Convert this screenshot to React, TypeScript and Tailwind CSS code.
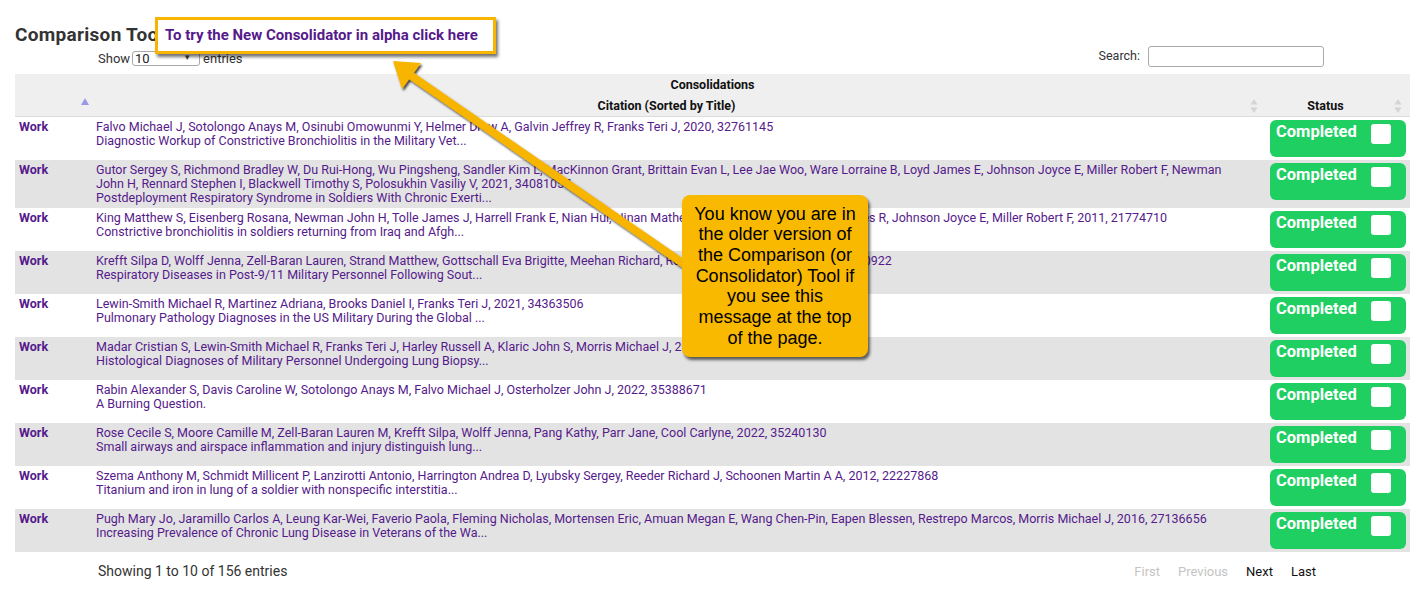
import React from 'react';

type Row = { authors: string; title: string };

const rows: Row[] = [
  {
    authors:
      'Falvo Michael J, Sotolongo Anays M, Osinubi Omowunmi Y, Helmer Drew A, Galvin Jeffrey R, Franks Teri J, 2020, 32761145',
    title: 'Diagnostic Workup of Constrictive Bronchiolitis in the Military Vet...',
  },
  {
    authors:
      'Gutor Sergey S, Richmond Bradley W, Du Rui-Hong, Wu Pingsheng, Sandler Kim L, MacKinnon Grant, Brittain Evan L, Lee Jae Woo, Ware Lorraine B, Loyd James E, Johnson Joyce E, Miller Robert F, Newman John H, Rennard Stephen I, Blackwell Timothy S, Polosukhin Vasiliy V, 2021, 34081057',
    title: 'Postdeployment Respiratory Syndrome in Soldiers With Chronic Exerti...',
  },
  {
    authors:
      'King Matthew S, Eisenberg Rosana, Newman John H, Tolle James J, Harrell Frank E, Nian Hui, Ninan Mathew, Lambright Eric S, Sheller James R, Johnson Joyce E, Miller Robert F, 2011, 21774710',
    title: 'Constrictive bronchiolitis in soldiers returning from Iraq and Afgh...',
  },
  {
    authors:
      'Krefft Silpa D, Wolff Jenna, Zell-Baran Lauren, Strand Matthew, Gottschall Eva Brigitte, Meehan Richard, Rose Cecile S, Maier LA, 2022, 35020922',
    title: 'Respiratory Diseases in Post-9/11 Military Personnel Following Sout...',
  },
  {
    authors: 'Lewin-Smith Michael R, Martinez Adriana, Brooks Daniel I, Franks Teri J, 2021, 34363506',
    title: 'Pulmonary Pathology Diagnoses in the US Military During the Global ...',
  },
  {
    authors:
      'Madar Cristian S, Lewin-Smith Michael R, Franks Teri J, Harley Russell A, Klaric John S, Morris Michael J, 2017, 28295045',
    title: 'Histological Diagnoses of Military Personnel Undergoing Lung Biopsy...',
  },
  {
    authors:
      'Rabin Alexander S, Davis Caroline W, Sotolongo Anays M, Falvo Michael J, Osterholzer John J, 2022, 35388671',
    title: 'A Burning Question.',
  },
  {
    authors:
      'Rose Cecile S, Moore Camille M, Zell-Baran Lauren M, Krefft Silpa, Wolff Jenna, Pang Kathy, Parr Jane, Cool Carlyne, 2022, 35240130',
    title: 'Small airways and airspace inflammation and injury distinguish lung...',
  },
  {
    authors:
      'Szema Anthony M, Schmidt Millicent P, Lanzirotti Antonio, Harrington Andrea D, Lyubsky Sergey, Reeder Richard J, Schoonen Martin A A, 2012, 22227868',
    title: 'Titanium and iron in lung of a soldier with nonspecific interstitia...',
  },
  {
    authors:
      'Pugh Mary Jo, Jaramillo Carlos A, Leung Kar-Wei, Faverio Paola, Fleming Nicholas, Mortensen Eric, Amuan Megan E, Wang Chen-Pin, Eapen Blessen, Restrepo Marcos, Morris Michael J, 2016, 27136656',
    title: 'Increasing Prevalence of Chronic Lung Disease in Veterans of the Wa...',
  },
];

// DataTables-style up/down sort glyph
function SortBoth() {
  return (
    <svg width="8" height="16" viewBox="0 0 8 16" className="absolute right-[8px] top-[3px]">
      <path d="M4 1 L7.5 6.5 H0.5 Z" fill="#d4d4d4" />
      <path d="M4 15 L7.5 9.5 H0.5 Z" fill="#d4d4d4" />
    </svg>
  );
}

function StatusBadge() {
  return (
    <div className="h-[37px] rounded-[6px] bg-[#1fcf61] flex items-start justify-between pl-[6px] pr-[15px]">
      <span className="mt-[2px] text-[16.5px] leading-[19px] font-bold text-white">Completed</span>
      <span className="mt-[4px] w-[20px] h-[20px] rounded-[3px] bg-white" />
    </div>
  );
}

// yellow annotation arrow, tail hidden under the callout
function Arrow() {
  return (
    <svg width="1418" height="590" className="absolute left-0 top-0 pointer-events-none">
      <defs>
        <filter id="arrowShadow" x="-20%" y="-20%" width="140%" height="140%">
          <feDropShadow dx="1.5" dy="2" stdDeviation="1.2" floodColor="#000" floodOpacity="0.75" />
        </filter>
      </defs>
      <g filter="url(#arrowShadow)">
        <line x1="684" y1="264" x2="410" y2="75" stroke="#f7b500" strokeWidth="8" strokeLinecap="round" />
        <path d="M393 61 L421 63 L402 89 Z" fill="#f7b500" />
      </g>
    </svg>
  );
}

export default function App() {
  return (
    <div className="relative w-[1418px] h-[590px] bg-white font-['Roboto',sans-serif] text-[#333] overflow-hidden">
      {/* title row */}
      <div className="flex items-center h-[22px] mt-[24px] pl-[15px]">
        <div className="w-[140px] shrink-0">
          <h2 className="text-[19px] leading-[22px] font-bold tracking-[0.3px] text-[#333] whitespace-nowrap">
            Comparison Tool
          </h2>
        </div>
        <div className="relative z-10 -my-[8px] h-[37px] w-[341px] bg-white border-[3px] border-[#f7b500] shadow-[2px_3px_3px_rgba(0,0,0,0.55)] flex items-center pl-[7px]">
          <span className="text-[15px] font-bold text-[#551a8b] whitespace-nowrap">
            To try the New Consolidator in alpha click here
          </span>
        </div>
      </div>

      {/* controls */}
      <div className="flex items-start justify-between pl-[98px] pr-[94px] h-[28px] text-[13px] text-[#333]">
        <div className="flex items-center gap-[2px] mt-[3px]">
          <span>Show</span>
          <div className="relative w-[68px] h-[15px] border border-[#aaa] rounded-[3px] flex items-center pl-[2px] text-[#222]">
            10
            <span className="absolute right-[8px] top-[0px] text-[8px] text-[#444]">▼</span>
          </div>
          <span className="ml-[1px]">entries</span>
        </div>
        <div className="flex items-center gap-[8px] mt-[0px]">
          <span className="text-[12.5px]">Search:</span>
          <div className="w-[176px] h-[21px] border border-[#aaa] rounded-[3px] bg-white" />
        </div>
      </div>

      {/* table */}
      <table className="ml-[15px] w-[1395px] border-collapse text-[12.5px] leading-[14px] table-fixed">
        <colgroup>
          <col className="w-[77px]" />
          <col />
          <col className="w-[144px]" />
        </colgroup>
        <thead className="bg-[#efefef]">
          <tr className="h-[21px]">
            <th colSpan={3} className="font-bold text-[12.5px] text-[#111] pt-[4px] align-top">
              Consolidations
            </th>
          </tr>
          <tr className="h-[21px] border-b border-[#dcdcdc]">
            <th className="relative">
              <svg width="8" height="7" viewBox="0 0 8 7" className="absolute left-[66px] top-[3px]">
                <path d="M4 0 L8 7 H0 Z" fill="#9a9ae8" />
              </svg>
            </th>
            <th className="relative font-bold text-[#111] pr-[25px] pt-[4px] align-top">
              Citation (Sorted by Title)
              <SortBoth />
            </th>
            <th className="relative font-bold text-[#111] pr-[25px] pt-[4px] align-top">
              Status
              <SortBoth />
            </th>
          </tr>
        </thead>
        <tbody>
          {rows.map((r, i) => (
            <tr key={i} className={i % 2 === 0 ? 'bg-white' : 'bg-[#e3e3e3]'}>
              <td className="align-top py-[3px] pl-[4px] font-bold text-[#551a8b]">Work</td>
              <td className="align-top py-[3px] pl-[4px] pr-[30px] text-[#551a8b]">
                <div>{r.authors}</div>
                <div>{r.title}</div>
              </td>
              <td className="align-top py-[3px] px-[4px]">
                <StatusBadge />
              </td>
            </tr>
          ))}
        </tbody>
      </table>

      {/* footer */}
      <div className="flex items-center justify-between pl-[98px] pr-[102px] mt-[11px] h-[18px]">
        <span className="text-[14px] text-[#333]">Showing 1 to 10 of 156 entries</span>
        <div className="flex items-center gap-[18px] text-[13px]">
          <span className="text-[#c4c4c4]">First</span>
          <span className="text-[#c4c4c4]">Previous</span>
          <span className="text-[#111]">Next</span>
          <span className="text-[#111]">Last</span>
        </div>
      </div>

      <Arrow />

      {/* annotation callout */}
      <div className="absolute left-[682px] top-[195px] w-[186px] h-[162px] rounded-[8px] bg-[#f9b900] shadow-[2px_3px_3px_rgba(0,0,0,0.6)] flex items-center justify-center px-[10px]">
        <p className="text-center text-[18px] leading-[20.7px] text-black font-['Liberation_Sans','Arial',sans-serif]">
          You know you are in the older version of the Comparison (or Consolidator) Tool if you see this message at the top of the page.
        </p>
      </div>
    </div>
  );
}
